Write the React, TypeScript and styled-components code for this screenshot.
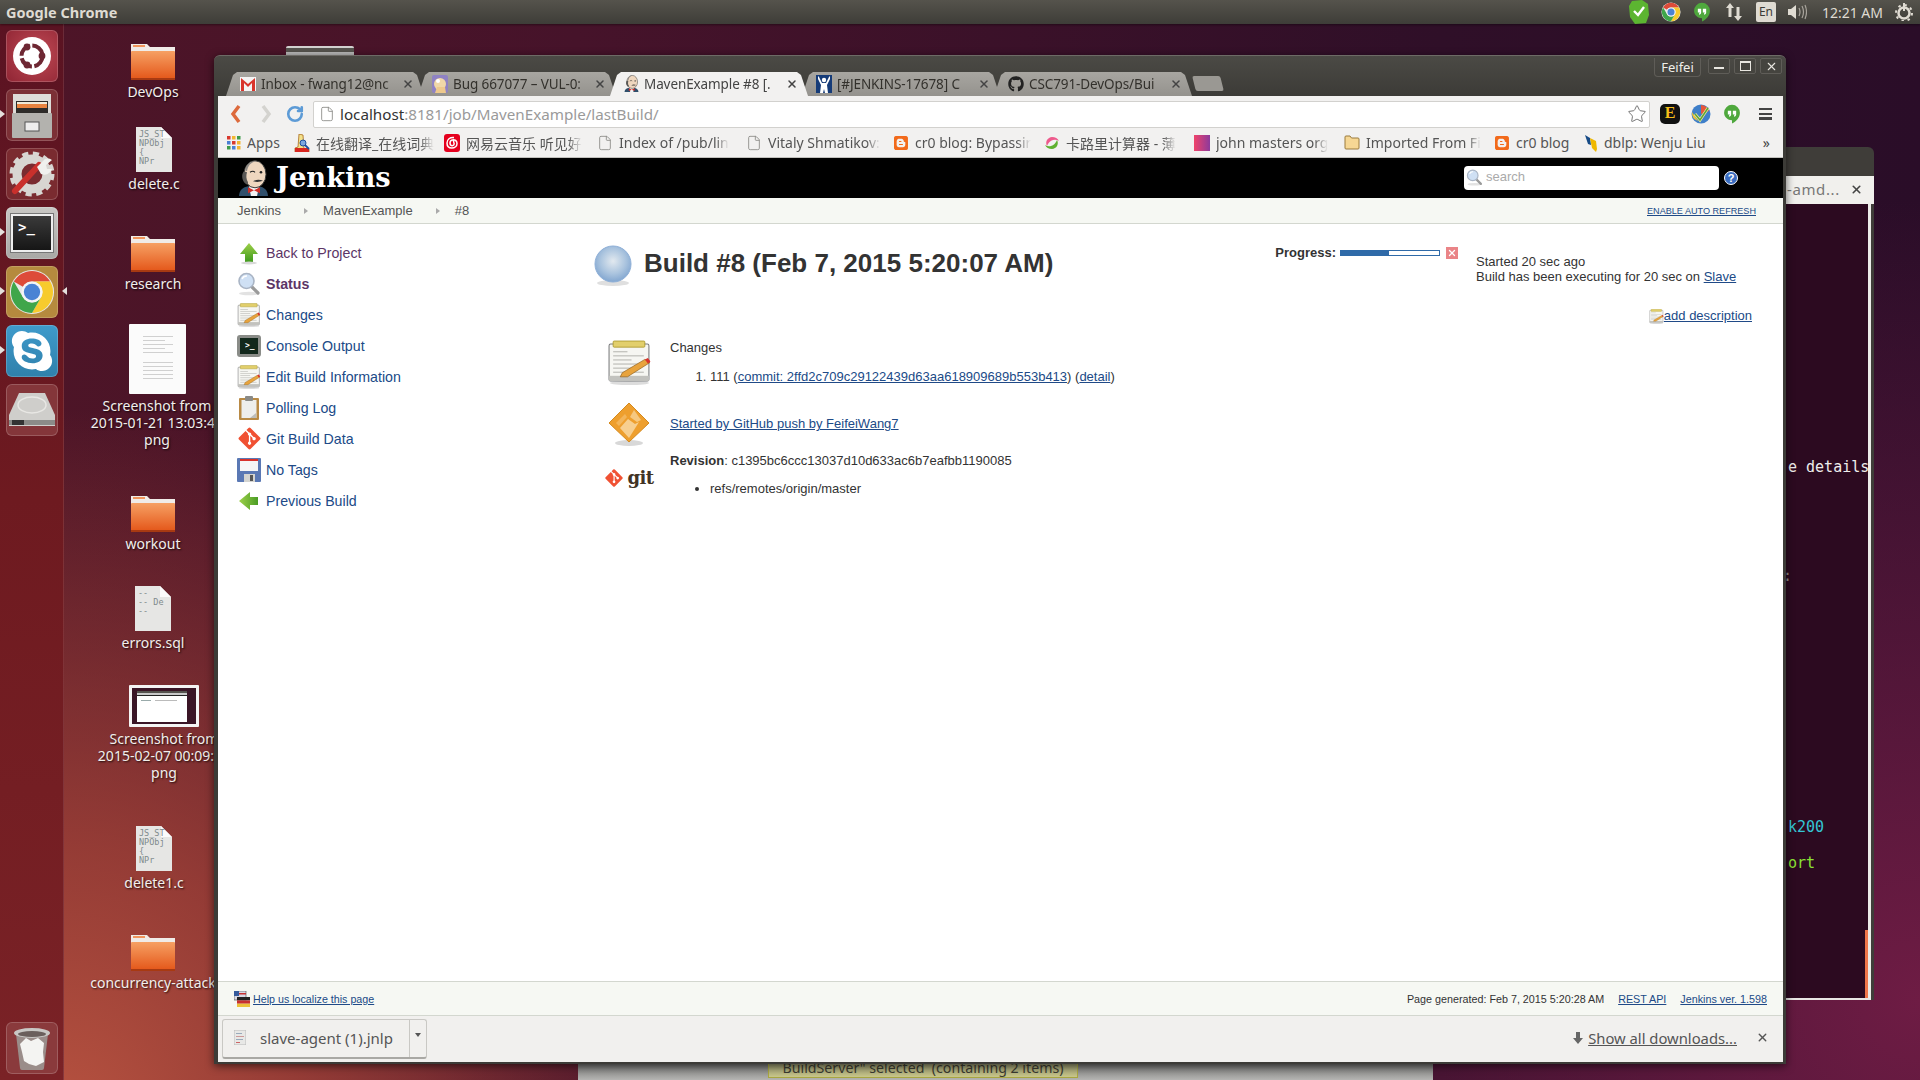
import React from "react";
import styled, { createGlobalStyle } from "styled-components";
import { FaGitAlt, FaGithub, FaSkype, FaBlogger } from "react-icons/fa";
import { File, RotateCw, Star, X } from "lucide-react";

const UI_FONT = `"Noto Sans", "Noto Sans CJK SC", sans-serif`;
const PAGE_FONT = `"Liberation Sans", "Noto Sans CJK SC", sans-serif`;

const GlobalStyle = createGlobalStyle`
  html, body {
    margin: 0;
    width: 1920px;
    height: 1080px;
    overflow: hidden;
    background: #2c0e28;
  }
  svg { display: block; flex-shrink: 0; }
`;

/* ---------- small drawings ---------- */

const ChromeLogo = ({ size }: { size: number }) => (
  <svg width={size} height={size} viewBox="0 0 48 48">
    <circle cx="24" cy="24" r="23" fill="#e8e8e8" />
    <path d="M5 13A22 22 0 0 1 43 13L24 13A11 11 0 0 0 14.5 18.5Z" fill="#dd4b39" />
    <path d="M43 13A22 22 0 0 1 24 46L33.5 29.5A11 11 0 0 0 24 13Z" fill="#f7cb2d" />
    <path d="M5 13A22 22 0 0 0 24 46L33.5 29.5A11 11 0 0 1 14.5 29.5Z" fill="#3fa64a" />
    <circle cx="24" cy="24" r="11" fill="#f4f4f4" />
    <circle cx="24" cy="24" r="8.5" fill="#4a83d4" />
  </svg>
);

const Hangouts = ({ size }: { size: number }) => (
  <svg width={size} height={size} viewBox="0 0 24 24">
    <path d="M12 1a9.5 9.5 0 0 0-9.5 9.5c0 5 4.5 9 9.5 9v4c5-2.5 9.5-7 9.5-13A9.5 9.5 0 0 0 12 1z" fill="#4fa83d" />
    <path d="M7 8h4v4.5c0 1.5-1 2.5-2.5 2.7v-1.7c.5-.2.8-.5.8-1H7zM13 8h4v4.5c0 1.5-1 2.5-2.5 2.7v-1.7c.5-.2.8-.5.8-1H13z" fill="#fff" />
  </svg>
);

const Folder = () => (
  <svg width="46" height="38" viewBox="0 0 46 38">
    <defs>
      <linearGradient id="folderBody" x1="0" y1="0" x2="0" y2="1">
        <stop offset="0" stopColor="#f6a063" />
        <stop offset="1" stopColor="#e4571a" />
      </linearGradient>
    </defs>
    <path d="M1 2h16l3 3h25v8H1z" fill="#f0ece8" />
    <rect x="3" y="3" width="12" height="2" fill="#f0955c" />
    <rect x="1" y="9" width="44" height="28" rx="1" fill="url(#folderBody)" />
    <rect x="1" y="36" width="44" height="2" fill="#a83a12" />
  </svg>
);

const CodeFile = ({ lines }: { lines: string[] }) => (
  <svg width="36" height="45" viewBox="0 0 36 45">
    <path d="M0 0h25l11 11v34H0z" fill="#e6e6e4" />
    <path d="M25 0v11h11z" fill="#fbfbfb" />
    {lines.map((line, i) => (
      <text key={i} x="3" y={10 + i * 9} fontSize="8.5" fontFamily="DejaVu Sans Mono" fill="#7f8a8c">
        {line}
      </text>
    ))}
  </svg>
);

const DocThumb = () => (
  <svg width="57" height="70" viewBox="0 0 57 70">
    <rect width="57" height="70" rx="1" fill="#fbfbfb" />
    {[12, 16, 20, 24, 28, 38, 42, 46, 50, 54].map((y) => (
      <rect key={y} x="14" y={y} width={y % 8 === 0 ? 22 : 30} height="1" fill="#d0d0d0" />
    ))}
  </svg>
);

const ScreenThumb = () => (
  <svg width="70" height="42" viewBox="0 0 70 42">
    <rect width="70" height="42" rx="1" fill="#f4f4f4" />
    <rect x="3" y="3" width="64" height="36" fill="#3a1526" />
    <rect x="8" y="6" width="50" height="31" fill="#fff" />
    <rect x="8" y="6" width="50" height="2" fill="#55534e" />
    <rect x="8" y="8" width="50" height="2" fill="#c8c8c8" />
    <rect x="8" y="10" width="50" height="1" fill="#222" />
    <rect x="12" y="15" width="10" height="1" fill="#9aa" />
    <rect x="26" y="15" width="22" height="1" fill="#bbb" />
  </svg>
);

const UbuntuTile = () => (
  <svg width="44" height="44" viewBox="0 0 44 44">
    <circle cx="22" cy="22" r="19" fill="#fff" />
    <circle cx="22" cy="22" r="10.5" fill="none" stroke="#6e2733" strokeWidth="4" strokeDasharray="14 2.5" />
    <circle cx="32" cy="22" r="3.4" fill="#6e2733" />
    <circle cx="17" cy="13" r="3.4" fill="#6e2733" />
    <circle cx="17" cy="31" r="3.4" fill="#6e2733" />
  </svg>
);

const CabinetTile = () => (
  <svg width="42" height="48" viewBox="0 0 42 48">
    <rect x="2" y="3" width="38" height="21" fill="#dedcd8" />
    <rect x="5" y="10" width="32" height="12" fill="#2e2c2a" />
    <rect x="6" y="13" width="30" height="4" fill="#e9833f" />
    <rect x="6" y="11" width="30" height="2" fill="#f2ead8" />
    <rect x="1" y="22" width="40" height="25" rx="1" fill="#b3b2ae" />
    <rect x="14" y="31" width="14" height="9" fill="#eee" stroke="#555" />
  </svg>
);

const ToolsTile = () => (
  <svg width="46" height="46" viewBox="0 0 46 46">
    <circle cx="23" cy="23" r="15" fill="none" stroke="#d8d6d2" strokeWidth="9" />
    <circle cx="23" cy="23" r="20" fill="none" stroke="#d8d6d2" strokeWidth="5" strokeDasharray="6 4.5" />
    <path d="M6 40L30 14" stroke="#c9302c" strokeWidth="6" strokeLinecap="round" />
    <path d="M28 16l8-8a8 8 0 0 1 7 1l-6 5 1 4 5 0a8 8 0 0 1-11 5z" fill="#f0f0ee" />
  </svg>
);

const TerminalTile = () => (
  <TerminalGlass>
    <span>&gt;_</span>
  </TerminalGlass>
);

const DriveTile = () => (
  <svg width="48" height="36" viewBox="0 0 48 36">
    <path d="M11 1h26l10 22v11H1V23z" fill="#cfcecb" />
    <ellipse cx="24" cy="13" rx="14" ry="8" fill="none" stroke="#e8e7e4" strokeWidth="1.500" />
    <rect x="1" y="28" width="46" height="5" fill="#8b8b88" />
    <rect x="4" y="28" width="12" height="5" fill="#333" />
  </svg>
);

const TrashTile = () => (
  <svg width="40" height="44" viewBox="0 0 40 44">
    <path d="M4 8h32l-4 34a2 2 0 0 1-2 2H10a2 2 0 0 1-2-2z" fill="#9a8d8a" />
    <ellipse cx="20" cy="7" rx="18" ry="5" fill="#c9c8c5" />
    <ellipse cx="20" cy="8" rx="14" ry="3" fill="#6a5f5c" />
    <path d="M8 18l6-6 5 3 7-3 6 5-1 9 1 10-8 4-7-2-5-3-2-9z" fill="#f4f4f2" />
  </svg>
);

const ShieldCheck = () => (
  <svg width="20" height="24" viewBox="0 0 20 24">
    <path d="M3 1l10-1 6 4 1 11-3 8-11 1-5-7-1-11z" fill="#5cb531" />
    <path d="M5 11l4 4 6-8" fill="none" stroke="#fff" strokeWidth="2.4" />
  </svg>
);

const TransferArrows = () => (
  <svg width="18" height="20" viewBox="0 0 18 20">
    <path d="M5 1l4 5H6.5v9h-3V6H1zM13 19l-4-5h2.500V5h3v9H17z" fill="#dfdbd2" />
  </svg>
);

const Speaker = () => (
  <svg width="20" height="16" viewBox="0 0 20 16">
    <path d="M1 5h3l5-4v14l-5-4H1z" fill="#dfdbd2" />
    <path d="M12 4q2 4 0 8M15 2q3 6 0 12M18 1q3 7 0 14" fill="none" stroke="#a8a49c" strokeWidth="1.2" />
  </svg>
);

const Cog = () => (
  <svg width="18" height="18" viewBox="0 0 18 18">
    <circle cx="9" cy="10" r="5.500" fill="none" stroke="#dfdbd2" strokeWidth="2.500" />
    <circle cx="9" cy="10" r="8" fill="none" stroke="#dfdbd2" strokeWidth="2" strokeDasharray="2.500 3.800" />
    <rect x="8" y="0" width="2" height="8" fill="#dfdbd2" />
  </svg>
);

const GmailIcon = () => (
  <svg width="16" height="14" viewBox="0 0 16 14">
    <rect width="16" height="14" fill="#f4f4f4" />
    <path d="M1 14V1l7 6 7-6v13h-3V6L8 10 4 6v8z" fill="#d9342b" />
  </svg>
);

const BugIcon = () => (
  <svg width="16" height="18" viewBox="0 0 16 18">
    <rect width="16" height="18" rx="2" fill="#8f82c4" />
    <circle cx="8" cy="9" r="6" fill="#f0d8a8" />
    <circle cx="6" cy="6" r="2" fill="#fff" />
    <path d="M3 18l2-6h8l1 6z" fill="#eec98c" />
  </svg>
);

const Butler = ({ size }: { size: number }) => (
  <svg width={size} height={size * 1.18} viewBox="0 0 31 36">
    <path d="M1 36c0-6 4-9 9-10h11c5 1 9 4 9 10z" fill="#2f4f6b" />
    <path d="M11 26h10l-2 10h-6z" fill="#f4f4f4" />
    <ellipse cx="17" cy="14" rx="11" ry="13.500" fill="#efd7bf" stroke="#3a3a38" strokeWidth="1" />
    <path d="M6 11c-3 3-2 9 1 12 2 2 3 1 3-1-2-3-2-7-1-10z" fill="#5a5855" />
    <path d="M7 10C8 3 14 .5 19 .8 13 2 10 5 9 11z" fill="#8d8a86" />
    <circle cx="23" cy="12" r="1.300" fill="#222" />
    <path d="M12 12q3-2 5 0" fill="none" stroke="#222" strokeWidth="1.100" />
    <path d="M15 21q5-3 10-.5-5 2-10 .5z" fill="#333" />
    <path d="M10 27l6 3 6-3v6l-6-3-6 3z" fill="#d12c26" />
  </svg>
);

const JiraIcon = () => (
  <svg width="16" height="18" viewBox="0 0 16 18">
    <rect width="16" height="18" fill="#153b78" />
    <circle cx="8" cy="5" r="2.200" fill="#fff" />
    <path d="M2 1l1 1 3 6h4l3-6 1-1v3l-3 6 1 8H9l-1-4-1 4H4l1-8-3-6z" fill="#fff" />
  </svg>
);

const BugzillaNote = () => (
  <svg width="16" height="18" viewBox="0 0 16 18">
    <path d="M5 0l4 1 1 14h5v3H1v-4l3-1z" fill="#f3e18b" stroke="#a86a1a" strokeWidth=".8" />
    <rect x="1" y="14" width="14" height="4" fill="#d8261f" />
    <circle cx="9" cy="9" r="3" fill="#7aa7e0" stroke="#1d4fa0" />
    <path d="M11 11l4 4" stroke="#1d4fa0" strokeWidth="1.800" />
  </svg>
);

const NeteaseIcon = () => (
  <NeteaseSquare>
    <svg width="12" height="13" viewBox="0 0 12 13">
      <path d="M8 1.500C4 1 1 3.500 1 7c0 3 2 5 4.800 5 3 0 5.200-2 5.200-4.500S9.200 3.500 7 3.800C5.200 4 4 5.300 4 7s1 2.700 2.300 2.700S8.500 8.500 8 7L7 3" fill="none" stroke="#fff" strokeWidth="1.500" />
    </svg>
  </NeteaseSquare>
);

const PageIcon = () => <File size={16} color="#8a8a86" strokeWidth={1.3} />;

const SwirlIcon = () => (
  <svg width="16" height="16" viewBox="0 0 16 16">
    <path d="M3 11A6 6 0 0 1 8 2q5 0 7 4-3-2-6-1-4 1-6 6z" fill="#ee5a8c" />
    <path d="M13 5a6 6 0 0 1-5 9q-5 0-7-4 3 2 6 1 4-1 6-6z" fill="#5fb130" />
  </svg>
);

const GradientSquare = styled.span`
  display: block;
  width: 16px;
  height: 16px;
  background: linear-gradient(90deg, #f0436a, #8c3a9c);
`;

const FolderMini = () => (
  <svg width="16" height="15" viewBox="0 0 16 15">
    <path d="M1 2a1 1 0 0 1 1-1h4l1.500 2H14a1 1 0 0 1 1 1v9a1 1 0 0 1-1 1H2a1 1 0 0 1-1-1z" fill="#f6d794" stroke="#9a7a3c" />
  </svg>
);

const DblpIcon = () => (
  <svg width="14" height="18" viewBox="0 0 14 18">
    <path d="M1 1l5 3 1 7-3-1z" fill="#174b86" />
    <path d="M6 4l6 3 1 8-1 3-4-4z" fill="#efb800" />
  </svg>
);

const AppsGrid = () => (
  <svg width="14" height="14" viewBox="0 0 14 14">
    {["#d9392e", "#f2b632", "#3e9c4b", "#4a7fd4", "#d9392e", "#f2b632", "#3e9c4b", "#4a7fd4", "#f2b632"].map((c, i) => (
      <rect key={i} x={(i % 3) * 5} y={Math.floor(i / 3) * 5} width="3.500" height="3.500" fill={c} />
    ))}
  </svg>
);

const TodoExt = () => (
  <svg width="20" height="20" viewBox="0 0 20 20">
    <circle cx="10" cy="10" r="9.500" fill="#3f7fc9" />
    <path d="M10 1a9 9 0 0 1 8 6l-8 3z" fill="#e6573a" />
    <path d="M1 8l6 9a9 9 0 0 1-6-9z" fill="#f4c430" />
    <path d="M4 10l5 6 8-12" fill="none" stroke="#f5e99c" strokeWidth="3" />
    <path d="M4 10l5 6 8-12" fill="none" stroke="#5aa53a" strokeWidth="1.500" />
  </svg>
);

const UpArrow = () => (
  <svg width="24" height="24" viewBox="0 0 24 24">
    <defs>
      <linearGradient id="greenArrow" x1="0" y1="0" x2="0" y2="1">
        <stop offset="0" stopColor="#9ed04a" />
        <stop offset="1" stopColor="#3f9a1c" />
      </linearGradient>
    </defs>
    <path d="M12 2l9 11h-5v8H8v-8H3z" fill="url(#greenArrow)" />
    <ellipse cx="12" cy="22" rx="8" ry="1.500" fill="#d8d8d8" />
  </svg>
);

const LeftArrow = () => (
  <svg width="24" height="24" viewBox="0 0 24 24">
    <path d="M2 12l11-9v5h8v8h-8v5z" fill="url(#greenArrowSide)" />
    <defs>
      <linearGradient id="greenArrowSide" x1="0" y1="0" x2="1" y2="0">
        <stop offset="0" stopColor="#9ed04a" />
        <stop offset="1" stopColor="#4a9c24" />
      </linearGradient>
    </defs>
  </svg>
);

const Magnifier = ({ size }: { size: number }) => (
  <svg width={size} height={size} viewBox="0 0 24 24">
    <ellipse cx="12" cy="21.500" rx="10" ry="1.800" fill="#e2e2e2" />
    <path d="M14 14l7 7" stroke="#9a9a9a" strokeWidth="3.200" strokeLinecap="round" />
    <circle cx="9.500" cy="9" r="7.500" fill="#cfe0f4" stroke="#a9b4c4" strokeWidth="1.600" />
    <path d="M5 7a5 5 0 0 1 5-3" stroke="#fff" strokeWidth="1.500" fill="none" />
  </svg>
);

const Notepad = ({ size }: { size: number }) => (
  <svg width={size} height={size} viewBox="0 0 42 44">
    <ellipse cx="21" cy="42" rx="19" ry="2" fill="#dcdcdc" />
    <rect x="1" y="4" width="39" height="36" rx="1.500" fill="#f6f6f2" stroke="#77787a" />
    <rect x="1" y="35" width="39" height="5" fill="#c2c2be" />
    <rect x="5" y="1" width="31" height="6" rx="1" fill="#e2cf6c" stroke="#a8952a" strokeWidth=".8" />
    {[11, 15, 19, 23, 27, 31].map((y, i) => (
      <rect key={y} x="5" y={y} width={i % 2 ? 30 : 14 + i * 2} height="1" fill="#b5b5b0" />
    ))}
    <path d="M14 32l22-13 5 3-22 14-7 0z" fill="#e8a33c" stroke="#96641c" strokeWidth=".7" />
    <path d="M36 19l3-1.500 2.500 3.500-2.500 2z" fill="#d8322c" />
  </svg>
);

const ConsoleIcon = () => (
  <ConsoleBezel>
    <span>&gt;_</span>
  </ConsoleBezel>
);

const Clipboard = () => (
  <svg width="22" height="24" viewBox="0 0 22 24">
    <rect x="1" y="2" width="20" height="22" rx="1" fill="#b98a45" />
    <rect x="3.500" y="4" width="15" height="18" fill="#eeeeec" />
    <path d="M12 22l6-5v5z" fill="#bdbdba" />
    <rect x="7" y="0" width="8" height="5" rx="1" fill="#8a8a86" />
  </svg>
);

const Floppy = () => (
  <svg width="24" height="24" viewBox="0 0 24 24">
    <rect width="24" height="24" rx="1" fill="#5a78b4" />
    <rect x="3" y="1" width="18" height="12" fill="#f6f6f6" />
    <rect x="3" y="1" width="18" height="2" fill="#d8322c" />
    <rect x="7" y="16" width="11" height="8" fill="#d4d4d0" />
    <rect x="13" y="17" width="3" height="6" fill="#555" />
  </svg>
);

const Ball = () => (
  <svg width="38" height="42" viewBox="0 0 38 42">
    <defs>
      <radialGradient id="ballFill" cx="0.5" cy="0.42" r="0.6">
        <stop offset="0" stopColor="#e2e9ef" />
        <stop offset="0.6" stopColor="#a9c3de" />
        <stop offset="1" stopColor="#7fa4cf" />
      </radialGradient>
    </defs>
    <ellipse cx="19" cy="38" rx="16" ry="3" fill="#dfdfdf" />
    <circle cx="19" cy="19" r="18" fill="url(#ballFill)" stroke="#8fb0d8" />
  </svg>
);

const UserDiamond = () => (
  <svg width="42" height="44" viewBox="0 0 42 44">
    <ellipse cx="21" cy="41" rx="14" ry="3" fill="#d8d8d8" />
    <path d="M21 1l20 20-20 19L1 21z" fill="#ee9f2e" stroke="#d58a1e" />
    <path d="M12 26l8-9 7 5 4-2-10 16z" fill="#f7cf90" />
    <path d="M26 8l-4 7 7 5 4-2z" fill="#f6c880" />
    <path d="M8 21l9-9 2 3-8 9z" fill="#f3b55a" />
  </svg>
);

const FlagsIcon = () => (
  <svg width="16" height="16" viewBox="0 0 16 16">
    <rect x="0" y="0" width="12" height="9" fill="#d8d8e4" stroke="#444" strokeWidth=".6" />
    <rect x="0" y="0" width="5" height="5" fill="#345a9c" />
    <rect x="5" y="2" width="7" height="1.500" fill="#c83030" />
    <rect x="3" y="6" width="13" height="3.400" fill="#222" />
    <rect x="3" y="9.400" width="13" height="3.300" fill="#c83030" />
    <rect x="3" y="12.700" width="13" height="3.300" fill="#ecc23a" />
  </svg>
);

/* ---------- desktop ---------- */

const Desktop = styled.div`
  position: relative;
  width: 1920px;
  height: 1080px;
  overflow: hidden;
  font-family: ${UI_FONT};
  background:
    radial-gradient(ellipse 620px 720px at 60px 1130px, #b85340 0%, rgba(172, 72, 58, 0.75) 40%, rgba(120, 40, 50, 0) 100%),
    radial-gradient(ellipse 800px 800px at 1920px 1000px, #6e1c44 0%, rgba(106, 28, 66, 0) 100%),
    linear-gradient(90deg, #4e1527 0%, #46132a 30%, #2f0f28 75%, #2a0d28 100%);
`;

const TopPanel = styled.header`
  position: relative;
  z-index: 5;
  display: flex;
  align-items: center;
  height: 24px;
  padding: 0 7px 0 6px;
  background: linear-gradient(#55534c, #3e3d38);
  box-shadow: 0 1px 2px rgba(0, 0, 0, 0.4);
  color: #dfdbd2;
  font-size: 14px;
`;

const PanelTitle = styled.span`
  font-weight: 700;
  font-size: 14.500px;
  flex: 1;
`;

const Indicators = styled.div`
  display: flex;
  align-items: center;
`;

const Indicator = styled.span<{ $ml: number }>`
  margin-left: ${({ $ml }) => $ml}px;
  display: flex;
  align-items: center;
`;

const LangBox = styled.span`
  display: block;
  width: 20px;
  height: 20px;
  line-height: 20px;
  border-radius: 2px;
  text-align: center;
  background: #dfdbd2;
  color: #3c3b37;
  font-size: 12px;
`;

const Clock = styled.span`
  font-size: 14px;
  color: #dfdbd2;
`;

const Launcher = styled.nav`
  position: absolute;
  left: 0;
  top: 24px;
  bottom: 0;
  width: 64px;
  display: flex;
  flex-direction: column;
  gap: 7px;
  padding: 6px 0 6px 6px;
  box-sizing: border-box;
  background: linear-gradient(#5a1322, #6e1a20 45%, #7a2226);
  border-right: 1px solid rgba(255, 255, 255, 0.1);
`;

const Tile = styled.div<{ $bg: string; $bottom?: boolean }>`
  position: relative;
  width: 52px;
  height: 52px;
  flex-shrink: 0;
  margin-top: ${({ $bottom }) => ($bottom ? "auto" : 0)};
  display: flex;
  align-items: center;
  justify-content: center;
  border-radius: 6px;
  background: ${({ $bg }) => $bg};
  box-shadow: inset 0 0 0 1px rgba(255, 255, 255, 0.18);
`;

const Pip = styled.span<{ $right?: boolean }>`
  position: absolute;
  top: 21px;
  ${({ $right }) => ($right ? "right: -9px;" : "left: -6px;")}
  width: 0;
  height: 0;
  border-top: 4px solid transparent;
  border-bottom: 4px solid transparent;
  ${({ $right }) => ($right ? "border-right: 5px solid #e4e0dc;" : "border-left: 5px solid #e4e0dc;")}
`;

const TerminalGlass = styled.div`
  width: 42px;
  height: 38px;
  padding: 3px 0 0 5px;
  box-sizing: border-box;
  border: 2px solid #eee;
  outline: 1px solid #777;
  background: linear-gradient(#3a3a3a, #161616);
  color: #fff;
  font: 700 14px "DejaVu Sans Mono", monospace;
`;

/* desktop icons sit at their own spot on the canvas */
const DeskIcon = styled.div<{ $cx: number; $top: number }>`
  position: absolute;
  left: ${({ $cx }) => $cx - 90}px;
  top: ${({ $top }) => $top}px;
  width: 180px;
  display: flex;
  flex-direction: column;
  align-items: center;
  gap: 3px;
`;

const DeskLabel = styled.div`
  color: #f2efec;
  font-size: 14px;
  line-height: 17px;
  text-align: center;
  white-space: pre;
  text-shadow: 1px 1px 2px rgba(0, 0, 0, 0.8);
`;

const BehindThumb = styled.div`
  position: absolute;
  left: 286px;
  top: 46px;
  width: 68px;
  height: 12px;
  border-radius: 2px 2px 0 0;
  background: linear-gradient(#d2d2d0 0 2px, #55534e 2px 6px, #bbb 6px);
`;

const BehindStatus = styled.div`
  position: absolute;
  left: 578px;
  top: 1050px;
  width: 855px;
  height: 30px;
  display: flex;
  align-items: flex-end;
  padding-left: 190px;
  box-sizing: border-box;
  background: linear-gradient(#6f6f6d 0 14px, #8a8a88 20px, #b5b5b3);
`;

const StatusPill = styled.span`
  display: block;
  width: 310px;
  height: 27px;
  margin-bottom: 2px;
  box-sizing: border-box;
  padding-top: 7px;
  line-height: 18px;
  text-align: center;
  white-space: pre;
  border: 1px solid #a8a640;
  background: linear-gradient(#8a8a66 40%, #c8c68a);
  color: #3a3a30;
  font-size: 14.200px;
`;

/* ---------- terminal behind the browser ---------- */

const TerminalWindow = styled.div`
  position: absolute;
  left: 1740px;
  top: 147px;
  width: 134px;
  height: 853px;
  display: flex;
  flex-direction: column;
  border-radius: 6px 6px 0 0;
  background: #3f3d39;
`;

const TerminalTabBar = styled.div`
  margin-top: 29px;
  height: 28px;
  display: flex;
  align-items: center;
  padding: 0 0 2px 47px;
  box-sizing: border-box;
  background: #f1f0ed;
  color: #777;
  font-size: 15px;
  letter-spacing: 0.6px;
`;

const TerminalClose = styled.span`
  margin-left: 10px;
  color: #444;
  display: flex;
`;

const TerminalBody = styled.div`
  position: relative;
  flex: 1;
  display: flex;
  flex-direction: column;
  margin-right: 3px;
  padding-left: 48px;
  border-bottom: 2px solid #e8e7e4;
  border-right: 3px solid #ecebe8;
  background: #2c0a20;
  font: 15px/18px "DejaVu Sans Mono", monospace;
  white-space: pre;
`;

const TerminalLine = styled.div<{ $color: string; $mt: number; $ml?: number }>`
  margin-top: ${({ $mt }) => $mt}px;
  margin-left: ${({ $ml }) => $ml ?? 0}px;
  height: 18px;
  color: ${({ $color }) => $color};
`;

const ScrollThumb = styled.span`
  position: absolute;
  right: 0;
  bottom: 0;
  width: 3px;
  height: 68px;
  background: #f0764a;
`;

/* ---------- browser window ---------- */

const BrowserWindow = styled.div`
  position: absolute;
  left: 214px;
  top: 55px;
  width: 1572px;
  height: 1009px;
  box-sizing: border-box;
  display: flex;
  flex-direction: column;
  padding: 0 3px 2px 4px;
  border-top: 1px solid #6d6b66;
  border-radius: 6px 6px 0 0;
  background: linear-gradient(#4b4a45, #3c3b37 40px);
  box-shadow: 0 2px 8px rgba(0, 0, 0, 0.6);
`;

const TitleStrip = styled.div`
  display: flex;
  height: 40px;
  flex-shrink: 0;
`;

const TabRow = styled.div`
  display: flex;
  flex: 1;
  align-items: flex-end;
  padding-left: 8px;
`;

const Tab = styled.div<{ $active?: boolean }>`
  position: relative;
  z-index: ${({ $active }) => ($active ? 2 : 1)};
  display: flex;
  align-items: center;
  width: 198px;
  height: 24px;
  margin-right: -6px;
  padding: 0 10px 1px 14px;
  box-sizing: border-box;
  clip-path: polygon(0 100%, 7px 12%, 11px 0, calc(100% - 11px) 0, calc(100% - 7px) 12%, 100% 100%);
  background: ${({ $active }) => ($active ? "#f2f1f0" : "linear-gradient(#a8a6a1, #94928d)")};
  color: ${({ $active }) => ($active ? "#444" : "#33312c")};
  font-size: 13.500px;
  letter-spacing: -0.1px;
`;

const TabLabel = styled.span`
  flex: 1;
  min-width: 0;
  margin: 0 4px 0 5px;
  overflow: hidden;
  white-space: nowrap;
  -webkit-mask-image: linear-gradient(90deg, #000 90%, transparent);
  mask-image: linear-gradient(90deg, #000 90%, transparent);
`;

const TabClose = styled.span`
  display: flex;
  color: #444;
`;

const NewTab = styled.div`
  width: 28px;
  height: 15px;
  margin: 0 0 5px 8px;
  border-radius: 2px;
  transform: skewX(14deg);
  background: #9a9893;
`;

const WindowControls = styled.div`
  display: flex;
  align-items: flex-start;
  gap: 4px;
  padding: 2px 1px 0 0;
`;

const ProfileButton = styled.div`
  width: 47px;
  height: 19px;
  line-height: 19px;
  margin-right: 3px;
  box-sizing: border-box;
  text-align: center;
  border: 1px solid #5f5d58;
  border-top: 0;
  border-radius: 0 0 4px 4px;
  color: #efeee9;
  font-size: 13px;
`;

const ControlButton = styled.div`
  width: 22px;
  height: 16px;
  display: flex;
  align-items: center;
  justify-content: center;
  box-sizing: border-box;
  border: 1px solid #5f5d58;
  border-radius: 2px;
  background: #45443f;
  color: #e8e6e0;
`;

const MinBar = styled.span`
  display: block;
  width: 10px;
  height: 2px;
  margin-top: 3px;
  background: #e8e6e0;
`;

const MaxBox = styled.span`
  display: block;
  width: 9px;
  height: 7px;
  border: 1px solid #e8e6e0;
  border-top-width: 2px;
`;

const Toolbar = styled.div`
  display: flex;
  align-items: center;
  height: 32px;
  flex-shrink: 0;
  padding: 0 11px 0 12px;
  background: #f2f1f0;
`;

const NavGroup = styled.div`
  display: flex;
  align-items: center;
  gap: 20px;
  width: 83px;
  margin-top: 4px;
`;

const ReloadIcon = styled(RotateCw)`
  margin-left: -6px;
`;

const OmniBox = styled.div`
  display: flex;
  align-items: center;
  flex: 1;
  height: 27px;
  margin-top: 4px;
  padding: 0 2px 0 5px;
  box-sizing: border-box;
  background: #fff;
  border: 1px solid #d2d1ce;
  border-radius: 2px;
  font-size: 15.200px;
  color: #9a9a9a;
`;

const Host = styled.span`
  margin-left: 5px;
  color: #333;
`;

const OmniPath = styled.span`
  flex: 1;
`;

const ExtensionRow = styled.div`
  display: flex;
  align-items: center;
  gap: 11px;
  margin: 4px 0 0 10px;
`;

const EBadge = styled.span`
  display: block;
  width: 20px;
  height: 20px;
  line-height: 20px;
  border-radius: 5px;
  background: #111;
  color: #f5bd1a;
  text-align: center;
  font: 900 16px "Liberation Serif", serif;
`;

const MenuIcon = styled.span`
  display: block;
  width: 13px;
  height: 12px;
  margin-left: 6px;
  background: linear-gradient(#444 0 2.5px, transparent 2.5px 4.750px, #444 4.750px 7.250px, transparent 7.250px 9.500px, #444 9.500px);
`;

const BookmarkBar = styled.div`
  display: flex;
  align-items: center;
  height: 29px;
  flex-shrink: 0;
  padding: 0 13px 0 9px;
  box-sizing: content-box;
  background: #f2f1f0;
  border-bottom: 1px solid #c2c1bd;
  color: #555;
  font-size: 14px;
`;

const Bookmark = styled.div<{ $w: number }>`
  display: flex;
  align-items: center;
  gap: 6px;
  width: ${({ $w }) => $w}px;
  flex-shrink: 0;
`;

const BookmarkLabel = styled.span<{ $fade?: boolean }>`
  overflow: hidden;
  white-space: nowrap;
  max-width: 118px;
  ${({ $fade }) =>
    $fade &&
    `-webkit-mask-image: linear-gradient(90deg, #000 88%, transparent);
     mask-image: linear-gradient(90deg, #000 88%, transparent);`}
`;

const MoreBookmarks = styled.span`
  margin-left: auto;
  color: #444;
`;

const NeteaseSquare = styled.span`
  display: flex;
  align-items: center;
  justify-content: center;
  width: 16px;
  height: 18px;
  border-radius: 3px;
  background: #e5001e;
`;

/* ---------- jenkins page ---------- */

const Page = styled.div`
  flex: 1;
  min-height: 0;
  display: flex;
  flex-direction: column;
  background: #fff;
  color: #333;
  font: 13px/16px ${PAGE_FONT};

  a {
    color: #204a87;
    text-decoration: underline;
  }
`;

const JenkinsHeader = styled.div`
  display: flex;
  align-items: center;
  height: 40px;
  flex-shrink: 0;
  padding: 0 45px 0 20px;
  background: #000;
`;

const Brand = styled.span`
  margin: -2px 0 0 7px;
  color: #fff;
  font: 700 27.300px "DejaVu Serif", serif;
`;

const SearchBox = styled.div`
  display: flex;
  align-items: center;
  gap: 3px;
  width: 255px;
  height: 24px;
  margin: -1px 0 0 auto;
  padding: 0 0 1px 2px;
  box-sizing: border-box;
  border-radius: 4px;
  background: #fff;
  color: #aaa;
  font-size: 13px;
`;

const HelpDot = styled.span`
  display: block;
  width: 14px;
  height: 14px;
  line-height: 13px;
  margin: -1px 0 0 5px;
  border-radius: 50%;
  border: 1px solid #fff;
  box-sizing: border-box;
  background: #3a6cc0;
  color: #fff;
  text-align: center;
  font: 700 11px/12px ${PAGE_FONT};
`;

const BreadcrumbBar = styled.div`
  display: flex;
  align-items: center;
  height: 25px;
  flex-shrink: 0;
  padding: 0 27px 0 19px;
  background: #f6f8f3;
  border-bottom: 1px solid #d3d7cf;
  color: #555;
`;

const CrumbArrow = styled.span`
  display: block;
  margin: 0 15px 0 23px;
  border-top: 3px solid transparent;
  border-bottom: 3px solid transparent;
  border-left: 4px solid #aaa;
`;

const AutoRefresh = styled.a`
  margin-left: auto;
  font-size: 9.100px;
`;

const Body = styled.div`
  flex: 1;
  min-height: 0;
  display: flex;
`;

const SidePanel = styled.ul`
  width: 376px;
  flex-shrink: 0;
  margin: 0;
  padding: 13px 0 0 17px;
  box-sizing: border-box;
  list-style: none;
`;

const TaskRow = styled.li`
  display: flex;
  align-items: center;
  height: 31px;
  font-size: 14.200px;
`;

const TaskIcon = styled.span`
  width: 28px;
  margin-right: 3px;
  display: flex;
  justify-content: center;
`;

const TaskLink = styled.a<{ $visited?: boolean; $bold?: boolean }>`
  && {
    text-decoration: none;
    color: ${({ $visited }) => ($visited ? "#5c3566" : "#204a87")};
    font-weight: ${({ $bold }) => ($bold ? 700 : 400)};
  }
`;

const ConsoleBezel = styled.div`
  width: 24px;
  height: 22px;
  padding: 3px 0 0 5px;
  box-sizing: border-box;
  border: 3px solid #8a8c88;
  border-radius: 3px;
  background: #12281c;
  color: #fff;
  font: 700 8px/10px "DejaVu Sans Mono", monospace;
`;

const MainColumn = styled.main`
  flex: 1;
  min-width: 0;
  padding-top: 21px;
`;

const TopRow = styled.div`
  display: flex;
  align-items: flex-start;
`;

const BuildTitle = styled.h1`
  margin: 2px 0 0 12px;
  color: #333;
  font-size: 26px;
  line-height: 32px;
  font-weight: 700;
`;

const ProgressBlock = styled.div`
  display: flex;
  align-items: center;
  margin: 0 18px 0 auto;
`;

const ProgressText = styled.b`
  margin-right: 4px;
`;

const ProgressTrack = styled.div`
  width: 100px;
  height: 6px;
  box-sizing: border-box;
  border: 1px solid #2f6aa8;
  background: #fff;
`;

const ProgressFill = styled.div`
  height: 100%;
  background: #2f6aa8;
`;

const StopButton = styled.span`
  display: flex;
  align-items: center;
  justify-content: center;
  width: 12px;
  height: 12px;
  margin-left: 6px;
  background: #ea8487;
  color: #fff;
`;

const InfoBlock = styled.div`
  width: 307px;
  margin-top: 9px;
  line-height: 15px;
  flex-shrink: 0;
`;

const DescriptionRow = styled.div`
  display: flex;
  justify-content: flex-end;
  align-items: center;
  margin-top: 21px;
  padding-right: 31px;
`;

const BuildRow = styled.div<{ $mt: number; $center?: boolean }>`
  display: flex;
  align-items: ${({ $center }) => ($center ? "center" : "flex-start")};
  margin-top: ${({ $mt }) => $mt}px;
  padding-left: 14px;
`;

const BuildIcon = styled.div<{ $mt?: number }>`
  display: flex;
  align-items: center;
  justify-content: center;
  width: 42px;
  margin: ${({ $mt }) => $mt ?? 0}px 20px 0 0;
`;

const SubList = styled.ol`
  margin: 13px 0 0;
  padding-left: 40px;
`;

const RefList = styled.ul`
  margin: 12px 0 0;
  padding-left: 40px;
`;

const GitLogo = styled.div`
  display: flex;
  align-items: center;
  gap: 3px;
  color: #413324;
  font: 700 18px/22px "DejaVu Serif", serif;
  letter-spacing: -0.5px;
`;

const PageFooter = styled.footer`
  display: flex;
  align-items: center;
  height: 33px;
  flex-shrink: 0;
  padding: 0 16px;
  border-top: 1px solid #d3d7cf;
  border-bottom: 1px solid #d3d7cf;
  box-sizing: content-box;
  background: #f6f8f3;
  font-size: 10.750px;
`;

const LocalizeLink = styled.a`
  display: flex;
  align-items: center;
  gap: 3px;
  font-size: 10.700px;
`;

const FooterRight = styled.div`
  display: flex;
  gap: 14px;
  margin-left: auto;
`;

const DownloadShelf = styled.div`
  display: flex;
  align-items: center;
  height: 46px;
  flex-shrink: 0;
  padding: 0 14px 0 4px;
  background: #f1f0ee;
  color: #555;
  font: 15px ${UI_FONT};
`;

const DownloadItem = styled.div`
  display: flex;
  align-items: center;
  width: 205px;
  height: 40px;
  box-sizing: border-box;
  border: 1px solid #c9c8c4;
  border-bottom: 2px solid #a9a8a4;
  border-radius: 3px;
`;

const DownloadName = styled.div`
  display: flex;
  align-items: center;
  gap: 14px;
  flex: 1;
  height: 100%;
  padding: 0 0 2px 11px;
  box-sizing: border-box;
  border-right: 1px solid #c9c8c4;
`;

const DownloadCaret = styled.span`
  display: block;
  margin: -8px 5px 0 5px;
  border-left: 3px solid transparent;
  border-right: 3px solid transparent;
  border-top: 4px solid #555;
`;

const ShowAll = styled.div`
  display: flex;
  align-items: center;
  gap: 5px;
  margin: -3px 0 0 auto;
  font-size: 14.800px;

  span {
    text-decoration: underline;
  }
`;

const ShelfClose = styled.span`
  display: flex;
  margin: -3px 0 0 19px;
  color: #555;
`;

const DownArrow = () => (
  <svg width="10" height="12" viewBox="0 0 10 12">
    <path d="M3 0h4v6h3l-5 6-5-6h3z" fill="#666" />
  </svg>
);

const SheetIcon = () => (
  <svg width="12" height="15" viewBox="0 0 12 15">
    <rect width="12" height="15" fill="#e8e8e6" stroke="#bbb" />
    <rect x="2" y="3" width="6" height="1" fill="#9ab" />
    <rect x="2" y="6" width="8" height="1" fill="#c99" />
    <rect x="2" y="9" width="7" height="1" fill="#9ab" />
    <rect x="2" y="12" width="4" height="1" fill="#c66" />
  </svg>
);

/* ---------- data ---------- */

const CODE = ["JS_ST", "NPObj", "{", "  NPr"];

const tabs = [
  { icon: <GmailIcon />, label: "Inbox - fwang12@nc" },
  { icon: <BugIcon />, label: "Bug 667077 – VUL-0:" },
  { icon: <Butler size={15} />, label: "MavenExample #8 [.", active: true },
  { icon: <JiraIcon />, label: "[#JENKINS-17678] C" },
  { icon: <FaGithub size={16} color="#222" />, label: "CSC791-DevOps/Bui" },
];

const bookmarks = [
  { w: 67, icon: <AppsGrid />, label: "Apps" },
  { w: 150, icon: <BugzillaNote />, label: "在线翻译_在线词典", fade: true },
  { w: 153, icon: <NeteaseIcon />, label: "网易云音乐 听见好", fade: true },
  { w: 149, icon: <PageIcon />, label: "Index of /pub/lin", fade: true },
  { w: 147, icon: <PageIcon />, label: "Vitaly Shmatikov:", fade: true },
  { w: 151, icon: <FaBlogger size={16} color="#f26a1b" />, label: "cr0 blog: Bypassir", fade: true },
  { w: 150, icon: <SwirlIcon />, label: "卡路里计算器 - 薄", fade: true },
  { w: 150, icon: <GradientSquare />, label: "john masters org", fade: true },
  { w: 150, icon: <FolderMini />, label: "Imported From Fi", fade: true },
  { w: 90, icon: <FaBlogger size={16} color="#f26a1b" />, label: "cr0 blog" },
  { w: 130, icon: <DblpIcon />, label: "dblp: Wenju Liu" },
];

const tasks = [
  { icon: <UpArrow />, label: "Back to Project", visited: true },
  { icon: <Magnifier size={24} />, label: "Status", visited: true, bold: true },
  { icon: <Notepad size={24} />, label: "Changes" },
  { icon: <ConsoleIcon />, label: "Console Output" },
  { icon: <Notepad size={24} />, label: "Edit Build Information" },
  { icon: <Clipboard />, label: "Polling Log" },
  { icon: <FaGitAlt size={25} color="#f05133" />, label: "Git Build Data" },
  { icon: <Floppy />, label: "No Tags" },
  { icon: <LeftArrow />, label: "Previous Build" },
];

const desktopIcons = [
  { cx: 153, top: 42, art: <Folder />, label: "DevOps" },
  { cx: 154, top: 127, art: <CodeFile lines={CODE} />, label: "delete.c" },
  { cx: 153, top: 234, art: <Folder />, label: "research" },
  { cx: 157, top: 324, art: <DocThumb />, label: "Screenshot from\n2015-01-21 13:03:47\npng" },
  { cx: 153, top: 494, art: <Folder />, label: "workout" },
  { cx: 153, top: 586, art: <CodeFile lines={["--", "-- De", "--"]} />, label: "errors.sql" },
  { cx: 164, top: 685, art: <ScreenThumb />, label: "Screenshot from\n2015-02-07 00:09:04\npng" },
  { cx: 154, top: 826, art: <CodeFile lines={CODE} />, label: "delete1.c" },
  { cx: 153, top: 933, art: <Folder />, label: "concurrency-attack" },
];

/* ---------- page ---------- */

export default function App() {
  return (
    <>
      <GlobalStyle />
      <Desktop>
        <TopPanel>
          <PanelTitle>Google Chrome</PanelTitle>
          <Indicators>
            <ShieldCheck />
            <Indicator $ml={12}>
              <ChromeLogo size={20} />
            </Indicator>
            <Indicator $ml={11}>
              <Hangouts size={20} />
            </Indicator>
            <Indicator $ml={13}>
              <TransferArrows />
            </Indicator>
            <Indicator $ml={13}>
              <LangBox>En</LangBox>
            </Indicator>
            <Indicator $ml={11}>
              <Speaker />
            </Indicator>
            <Indicator $ml={15}>
              <Clock>12:21 AM</Clock>
            </Indicator>
            <Indicator $ml={12}>
              <Cog />
            </Indicator>
          </Indicators>
        </TopPanel>

        <Launcher>
          <Tile $bg="radial-gradient(circle at 60% 45%, #c04a55, #8e2433)">
            <UbuntuTile />
          </Tile>
          <Tile $bg="#7c3036">
            <Pip />
            <CabinetTile />
          </Tile>
          <Tile $bg="#7a2b30">
            <ToolsTile />
          </Tile>
          <Tile $bg="linear-gradient(#c9c8c5, #a9a8a5)">
            <Pip />
            <TerminalTile />
          </Tile>
          <Tile $bg="#b58a3e">
            <Pip />
            <Pip $right />
            <ChromeLogo size={46} />
          </Tile>
          <Tile $bg="linear-gradient(#3f9bcb, #2f80ab)">
            <Pip />
            <FaSkype size={46} color="#fff" />
          </Tile>
          <Tile $bg="#84363a">
            <DriveTile />
          </Tile>
          <Tile $bg="#8a3a3c" $bottom>
            <TrashTile />
          </Tile>
        </Launcher>

        {desktopIcons.map((item) => (
          <DeskIcon key={item.label} $cx={item.cx} $top={item.top}>
            {item.art}
            <DeskLabel>{item.label}</DeskLabel>
          </DeskIcon>
        ))}

        <BehindThumb />
        <BehindStatus>
          <StatusPill>BuildServer" selected  (containing 2 items)</StatusPill>
        </BehindStatus>

        <TerminalWindow>
          <TerminalTabBar>
            -amd...
            <TerminalClose>
              <X size={13} strokeWidth={3} />
            </TerminalClose>
          </TerminalTabBar>
          <TerminalBody>
            <TerminalLine $color="#eeeeec" $mt={254}>e details</TerminalLine>
            <TerminalLine $color="#8f8f8a" $mt={91} $ml={-5}>:</TerminalLine>
            <TerminalLine $color="#34c5d5" $mt={233}>k200</TerminalLine>
            <TerminalLine $color="#8ae234" $mt={18}>ort</TerminalLine>
            <ScrollThumb />
          </TerminalBody>
        </TerminalWindow>

        <BrowserWindow>
          <TitleStrip>
            <TabRow>
              {tabs.map((tab) => (
                <Tab key={tab.label} $active={tab.active}>
                  {tab.icon}
                  <TabLabel>{tab.label}</TabLabel>
                  <TabClose>
                    <X size={12} strokeWidth={3} />
                  </TabClose>
                </Tab>
              ))}
              <NewTab />
            </TabRow>
            <WindowControls>
              <ProfileButton>Feifei</ProfileButton>
              <ControlButton>
                <MinBar />
              </ControlButton>
              <ControlButton>
                <MaxBox />
              </ControlButton>
              <ControlButton>
                <X size={13} strokeWidth={2} />
              </ControlButton>
            </WindowControls>
          </TitleStrip>

          <Toolbar>
            <NavGroup>
              <svg width="11" height="20" viewBox="0 0 11 20">
                <path d="M9 2L3 10l6 8" fill="none" stroke="#dd6a3c" strokeWidth="3.500" />
              </svg>
              <svg width="11" height="20" viewBox="0 0 11 20">
                <path d="M2 2l6 8-6 8" fill="none" stroke="#d4d3cf" strokeWidth="3.500" />
              </svg>
              <ReloadIcon size={18} color="#5d9bd6" strokeWidth={3.500} />
            </NavGroup>
            <OmniBox>
              <File size={16} color="#8a8a86" strokeWidth={1.300} />
              <Host>localhost</Host>
              <OmniPath>:8181/job/MavenExample/lastBuild/</OmniPath>
              <Star size={20} color="#777" strokeWidth={1.200} />
            </OmniBox>
            <ExtensionRow>
              <EBadge>E</EBadge>
              <TodoExt />
              <Hangouts size={20} />
              <MenuIcon />
            </ExtensionRow>
          </Toolbar>

          <BookmarkBar>
            {bookmarks.map((b) => (
              <Bookmark key={b.w + b.label} $w={b.w}>
                {b.icon}
                <BookmarkLabel $fade={b.fade}>{b.label}</BookmarkLabel>
              </Bookmark>
            ))}
            <MoreBookmarks>»</MoreBookmarks>
          </BookmarkBar>

          <Page>
            <JenkinsHeader>
              <Butler size={31} />
              <Brand>Jenkins</Brand>
              <SearchBox>
                <Magnifier size={17} />
                search
              </SearchBox>
              <HelpDot>?</HelpDot>
            </JenkinsHeader>

            <BreadcrumbBar>
              Jenkins
              <CrumbArrow />
              MavenExample
              <CrumbArrow />
              #8
              <AutoRefresh href="#">ENABLE AUTO REFRESH</AutoRefresh>
            </BreadcrumbBar>

            <Body>
              <SidePanel>
                {tasks.map((task) => (
                  <TaskRow key={task.label}>
                    <TaskIcon>{task.icon}</TaskIcon>
                    <TaskLink href="#" $visited={task.visited} $bold={task.bold}>
                      {task.label}
                    </TaskLink>
                  </TaskRow>
                ))}
              </SidePanel>

              <MainColumn>
                <TopRow>
                  <Ball />
                  <BuildTitle>Build #8 (Feb 7, 2015 5:20:07 AM)</BuildTitle>
                  <ProgressBlock>
                    <ProgressText>Progress:</ProgressText>
                    <ProgressTrack>
                      <ProgressFill style={{ width: "49%" }} />
                    </ProgressTrack>
                    <StopButton>
                      <X size={10} strokeWidth={3} />
                    </StopButton>
                  </ProgressBlock>
                  <InfoBlock>
                    Started 20 sec ago
                    <br />
                    Build has been executing for 20 sec on <a href="#">Slave</a>
                  </InfoBlock>
                </TopRow>

                <DescriptionRow>
                  <Notepad size={15} />
                  <a href="#">add description</a>
                </DescriptionRow>

                <BuildRow $mt={16}>
                  <BuildIcon>
                    <Notepad size={45} />
                  </BuildIcon>
                  <div>
                    Changes
                    <SubList>
                      <li>
                        111 (<a href="#">commit: 2ffd2c709c29122439d63aa618909689b553b413</a>) (<a href="#">detail</a>)
                      </li>
                    </SubList>
                  </div>
                </BuildRow>

                <BuildRow $mt={17} $center>
                  <BuildIcon>
                    <UserDiamond />
                  </BuildIcon>
                  <a href="#">Started by GitHub push by FeifeiWang7</a>
                </BuildRow>

                <BuildRow $mt={7} $center>
                  <BuildIcon $mt={6}>
                    <GitLogo>
                      <FaGitAlt size={20} color="#f05133" />
                      git
                    </GitLogo>
                  </BuildIcon>
                  <div>
                    <b>Revision</b>: c1395bc6ccc13037d10d633ac6b7eafbb1190085
                    <RefList>
                      <li>refs/remotes/origin/master</li>
                    </RefList>
                  </div>
                </BuildRow>
              </MainColumn>
            </Body>

            <PageFooter>
              <LocalizeLink href="#">
                <FlagsIcon />
                Help us localize this page
              </LocalizeLink>
              <FooterRight>
                <span>Page generated: Feb 7, 2015 5:20:28 AM</span>
                <a href="#">REST API</a>
                <a href="#">Jenkins ver. 1.598</a>
              </FooterRight>
            </PageFooter>

            <DownloadShelf>
              <DownloadItem>
                <DownloadName>
                  <SheetIcon />
                  slave-agent (1).jnlp
                </DownloadName>
                <DownloadCaret />
              </DownloadItem>
              <ShowAll>
                <DownArrow />
                <span>Show all downloads...</span>
              </ShowAll>
              <ShelfClose>
                <X size={13} strokeWidth={2.500} />
              </ShelfClose>
            </DownloadShelf>
          </Page>
        </BrowserWindow>
      </Desktop>
    </>
  );
}
